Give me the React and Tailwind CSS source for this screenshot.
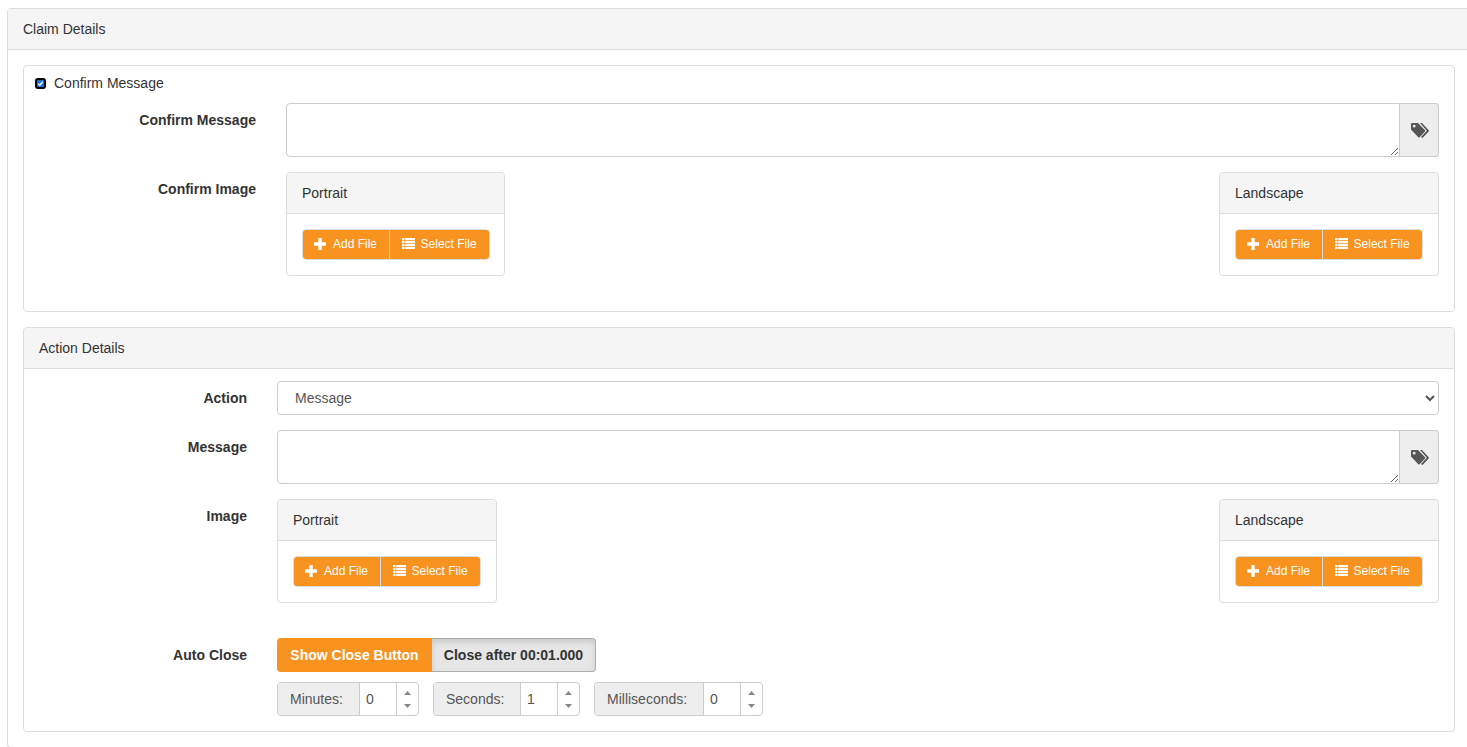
function FileButtons() {
    return (
        <div className="flex w-fit h-[31px] rounded border border-[#ddd] text-white text-[12px] whitespace-nowrap">
            <button className="flex items-center gap-[7px] bg-[#f7931e] pl-[11px] pr-3 pb-[2px] rounded-l-[3px] border-r border-[#ddd]">
                <svg width="12" height="12" viewBox="0 0 12 12" fill="currentColor"><path d="M4.3 0h3.4v4.3H12v3.4H7.7V12H4.3V7.7H0V4.3h4.3z" /></svg>
                Add File
            </button>
            <button className="flex items-center gap-[6px] bg-[#f7931e] pl-[11.5px] pr-3 pb-[2px] rounded-r-[3px]">
                <svg width="13" height="11" viewBox="0 0 13 11" fill="currentColor"><path d="M0 0h2.5v2.2H0zM3.2 0H13v2.2H3.2zM0 2.9h2.5v2.2H0zM3.2 2.9H13v2.2H3.2zM0 5.8h2.5V8H0zM3.2 5.8H13V8H3.2zM0 8.8h2.5V11H0zM3.2 8.8H13V11H3.2z" /></svg>
                Select File
            </button>
        </div>
    );
}

function UploadPanel({ title, className }) {
    return (
        <div className={`border border-[#ddd] rounded ${className}`}>
            <div className="h-[41px] bg-[#f5f5f5] border-b border-[#ddd] rounded-t flex items-center px-[15px]">{title}</div>
            <div className="p-[15px]">
                <FileButtons />
            </div>
        </div>
    );
}

function MessageInput() {
    return (
        <div className="flex h-[54px]">
            <textarea className="flex-1 border border-[#ccc] rounded-l outline-none" />
            <div className="w-[39px] bg-[#eee] border border-l-0 border-[#ccc] rounded-r flex items-center justify-center text-[#555]">
                <svg width="18" height="15" viewBox="0 0 18 15" fill="currentColor" fillRule="evenodd" className="ml-[1px]">
                    <path d="M1 0h6l7 7.2a.9.9 0 0 1 0 1.2l-5.4 5.8a.9.9 0 0 1-1.3 0L0 6.6V1a1 1 0 0 1 1-1zM3.2 1.8a1.4 1.4 0 1 0 0 2.8 1.4 1.4 0 0 0 0-2.8z" />
                    <path d="M9 0h2l6.7 7.2a.9.9 0 0 1 0 1.2L12 14.6a.9.9 0 0 1-1.3 0l-.7-.7 5.8-6.1z" />
                </svg>
            </div>
        </div>
    );
}

function Spinner({ label, value, className }) {
    return (
        <div className={`flex h-[34px] border border-[#ccc] rounded text-[#555] ${className}`}>
            <div className="flex-1 bg-[#eee] border-r border-[#ccc] rounded-l flex items-center pl-3">{label}</div>
            <div className="w-[37px] flex items-center pl-[6px] border-r border-[#ccc]">{value}</div>
            <div className="w-[21px] flex flex-col items-center justify-center gap-[9px] text-[#888]">
                <svg width="7" height="4" viewBox="0 0 7 4" fill="currentColor"><path d="M3.5 0L7 4H0z" /></svg>
                <svg width="7" height="4" viewBox="0 0 7 4" fill="currentColor"><path d="M3.5 4L0 0h7z" /></svg>
            </div>
        </div>
    );
}

export default function App() {
    return (
        <div className="h-[747px] overflow-hidden bg-white text-[14px] text-[#333] font-['Liberation_Sans',Arial,sans-serif]">
            <div className="ml-[7px] mt-2 w-[1480px] border border-[#ddd] rounded">
                <div className="h-[41px] bg-[#f5f5f5] border-b border-[#ddd] flex items-center px-[15px]">Claim Details</div>
                <div className="p-[15px] flex flex-col gap-[15px] w-[1462px]">
                    <div className="h-[247px] border border-[#ddd] rounded pr-[15px]">
                        <label className="flex items-center gap-2 h-[37px] pb-[3px] pl-[11px]">
                            <input type="checkbox" defaultChecked className="sr-only" />
                            <svg width="11" height="11" viewBox="0 0 11 11">
                                <rect width="11" height="11" rx="3" fill="#000" />
                                <rect x="2" y="2" width="7" height="7" rx="1" fill="#1a73e8" />
                                <path d="M3.2 5.6l1.6 1.6 3-3.4" fill="none" stroke="#fff" strokeWidth="1.3" />
                            </svg>
                            Confirm Message
                        </label>
                        <div className="flex gap-[30px]">
                            <div className="w-[232px] text-right font-bold pt-[7px]">Confirm Message</div>
                            <div className="flex-1">
                                <MessageInput />
                            </div>
                        </div>
                        <div className="flex gap-[30px] mt-[15px]">
                            <div className="w-[232px] text-right font-bold pt-[7px]">Confirm Image</div>
                            <div className="flex-1 flex justify-between">
                                <UploadPanel title="Portrait" className="w-[219px]" />
                                <UploadPanel title="Landscape" className="w-[220px]" />
                            </div>
                        </div>
                    </div>
                    <div className="h-[405px] border border-[#ddd] rounded">
                        <div className="h-[41px] bg-[#f5f5f5] border-b border-[#ddd] rounded-t flex items-center px-[15px]">Action Details</div>
                        <div className="pr-[15px] pt-3">
                            <div className="flex gap-[30px] items-center">
                                <div className="w-[223px] text-right font-bold">Action</div>
                                <select className="flex-1 h-[34px] border border-[#ccc] rounded pl-[13px] text-[#555] bg-white outline-none">
                                    <option>Message</option>
                                </select>
                            </div>
                            <div className="flex gap-[30px] mt-[15px]">
                                <div className="w-[223px] text-right font-bold pt-[7px]">Message</div>
                                <div className="flex-1">
                                    <MessageInput />
                                </div>
                            </div>
                            <div className="flex gap-[30px] mt-[15px]">
                                <div className="w-[223px] text-right font-bold pt-[7px]">Image</div>
                                <div className="flex-1 flex justify-between">
                                    <UploadPanel title="Portrait" className="w-[220px]" />
                                    <UploadPanel title="Landscape" className="w-[220px]" />
                                </div>
                            </div>
                            <div className="flex gap-[30px] mt-[35px]">
                                <div className="w-[223px] text-right font-bold pt-[7px]">Auto Close</div>
                                <div className="flex flex-col gap-[10px]">
                                    <div className="flex h-[34px] font-bold w-fit">
                                        <div className="w-[155px] bg-[#f7931e] text-white rounded-l flex items-center justify-center">Show Close Button</div>
                                        <div className="w-[164px] bg-[#e6e6e6] border border-l-0 border-[#adadad] rounded-r shadow-[inset_0_3px_5px_rgba(0,0,0,0.125)] flex items-center justify-center">Close after 00:01.000</div>
                                    </div>
                                    <div className="flex gap-[14px]">
                                        <Spinner label="Minutes:" value="0" className="w-[142px]" />
                                        <Spinner label="Seconds:" value="1" className="w-[147px]" />
                                        <Spinner label="Milliseconds:" value="0" className="w-[169px]" />
                                    </div>
                                </div>
                            </div>
                        </div>
                    </div>
                </div>
            </div>
        </div>
    );
}
